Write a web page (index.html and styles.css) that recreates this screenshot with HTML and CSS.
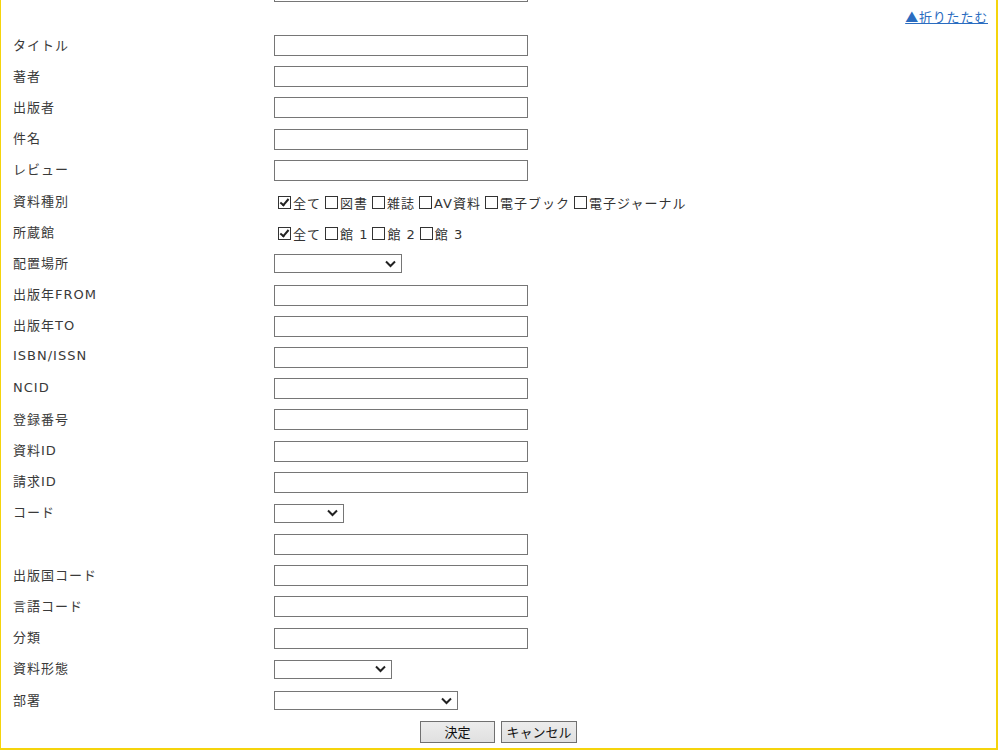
FILE: index.html
```html
<!DOCTYPE html>
<html lang="ja">
<head>
<meta charset="utf-8">
<title>詳細検索</title>
<link rel="stylesheet" href="styles.css">
</head>
<body>
<div class="page">
  <div class="prev-row"><span class="label"></span><input class="text" type="text"></div>
  <div class="toggle-row"><a class="toggle" href="#">▲折りたたむ</a></div>
  <form class="form">
    <div class="row"><span class="label">タイトル</span><input class="text" type="text"></div>
    <div class="row"><span class="label">著者</span><input class="text" type="text"></div>
    <div class="row"><span class="label">出版者</span><input class="text" type="text"></div>
    <div class="row"><span class="label">件名</span><input class="text" type="text"></div>
    <div class="row"><span class="label">レビュー</span><input class="text" type="text"></div>
    <div class="row"><span class="label">資料種別</span>
      <div class="checks">
        <label class="chk"><input type="checkbox" checked>全て</label>
        <label class="chk"><input type="checkbox">図書</label>
        <label class="chk"><input type="checkbox">雑誌</label>
        <label class="chk"><input type="checkbox">AV資料</label>
        <label class="chk"><input type="checkbox">電子ブック</label>
        <label class="chk"><input type="checkbox">電子ジャーナル</label>
      </div>
    </div>
    <div class="row"><span class="label">所蔵館</span>
      <div class="checks">
        <label class="chk"><input type="checkbox" checked>全て</label>
        <label class="chk"><input type="checkbox">館 1</label>
        <label class="chk"><input type="checkbox">館 2</label>
        <label class="chk"><input type="checkbox">館 3</label>
      </div>
    </div>
    <div class="row"><span class="label">配置場所</span><select class="sel sel-place"><option></option></select></div>
    <div class="row"><span class="label">出版年FROM</span><input class="text" type="text"></div>
    <div class="row"><span class="label">出版年TO</span><input class="text" type="text"></div>
    <div class="row"><span class="label">ISBN/ISSN</span><input class="text" type="text"></div>
    <div class="row"><span class="label">NCID</span><input class="text" type="text"></div>
    <div class="row"><span class="label">登録番号</span><input class="text" type="text"></div>
    <div class="row"><span class="label">資料ID</span><input class="text" type="text"></div>
    <div class="row"><span class="label">請求ID</span><input class="text" type="text"></div>
    <div class="row"><span class="label">コード</span><select class="sel sel-code"><option></option></select></div>
    <div class="row"><span class="label"></span><input class="text" type="text"></div>
    <div class="row"><span class="label">出版国コード</span><input class="text" type="text"></div>
    <div class="row"><span class="label">言語コード</span><input class="text" type="text"></div>
    <div class="row"><span class="label">分類</span><input class="text" type="text"></div>
    <div class="row"><span class="label">資料形態</span><select class="sel sel-form"><option></option></select></div>
    <div class="row"><span class="label">部署</span><select class="sel sel-dept"><option></option></select></div>
    <div class="buttons">
      <button type="button" class="btn btn-ok">決定</button>
      <button type="button" class="btn btn-cancel">キャンセル</button>
    </div>
  </form>
</div>
</body>
</html>
```
FILE: styles.css
```css
html, body {
  margin: 0;
  padding: 0;
  background: #ffffff;
}

body {
  font-family: "DejaVu Sans", "Noto Sans CJK JP", sans-serif;
  font-size: 13px;
  color: #333333;
}

.page {
  width: 998px;
  box-sizing: border-box;
  border-left: 1px solid #f5d40c;
  border-right: 2px solid #f5d40c;
  border-bottom: 2px solid #f5d40c;
  padding: 0 0 1px 12px;
}

.prev-row {
  height: 2px;
  overflow: hidden;
  display: flex;
  align-items: flex-end;
}

.toggle-row {
  height: 28px;
  display: flex;
  align-items: center;
  justify-content: flex-end;
  padding-right: 8px;
}

.toggle {
  color: #2a6cc0;
  text-decoration: underline;
  font-family: "Noto Sans CJK JP", sans-serif;
  font-size: 13px;
  letter-spacing: 0.8px;
}

.form {
  margin: 0;
  display: flex;
  flex-direction: column;
}

.row {
  height: 31.2px;
  display: flex;
  align-items: center;
}

.label {
  width: 261px;
  flex: none;
  letter-spacing: 1px;
  color: #3a3a3a;
  padding-bottom: 3px;
}

.text {
  box-sizing: border-box;
  width: 254px;
  height: 21px;
  margin: 0;
  padding: 1px 3px;
  border: 1px solid #767676;
  border-radius: 0;
  background: #ffffff;
  font: inherit;
  flex: none;
}

.sel {
  box-sizing: border-box;
  height: 19px;
  margin: 0;
  padding: 0 2px;
  border: 1px solid #767676;
  border-radius: 0;
  background-color: #ffffff;
  appearance: none;
  -webkit-appearance: none;
  background-image: url("data:image/svg+xml,%3Csvg xmlns='http://www.w3.org/2000/svg' width='11' height='8' viewBox='0 0 11 8'%3E%3Cpath d='M1 1.5 L5.5 6 L10 1.5' fill='none' stroke='%23222' stroke-width='2'/%3E%3C/svg%3E");
  background-repeat: no-repeat;
  background-position: right 5px center;
  background-size: 11px 8px;
  font: inherit;
  flex: none;
}

.sel-place { width: 128px; }
.sel-code { width: 70px; }
.sel-form { width: 118px; }
.sel-dept { width: 184px; }

.checks {
  display: flex;
  align-items: center;
  padding-top: 2px;
}

.chk {
  display: flex;
  align-items: center;
  letter-spacing: 1px;
  color: #333333;
}

.chk input {
  appearance: none;
  -webkit-appearance: none;
  position: relative;
  box-sizing: border-box;
  width: 13px;
  height: 13px;
  margin: 0 2px 0 4px;
  border: 1px solid #333333;
  border-radius: 0;
  background: #ffffff;
  flex: none;
}

.chk input:checked::after {
  content: "";
  position: absolute;
  left: 3px;
  top: 0px;
  width: 3px;
  height: 7px;
  border: solid #222222;
  border-width: 0 2px 2px 0;
  transform: rotate(40deg);
}

.buttons {
  height: 31.2px;
  display: flex;
  align-items: center;
  justify-content: center;
  gap: 6px;
  margin-left: -12px;
}

.btn {
  box-sizing: border-box;
  height: 22px;
  margin: 0;
  padding: 0;
  border: 1px solid #707070;
  border-radius: 0;
  background: linear-gradient(#ececec, #e0e0e0);
  font-family: "Noto Sans CJK JP", sans-serif;
  font-size: 13px;
  color: #111111;
}

.btn-ok { width: 75px; }
.btn-cancel { width: 76px; }
```
